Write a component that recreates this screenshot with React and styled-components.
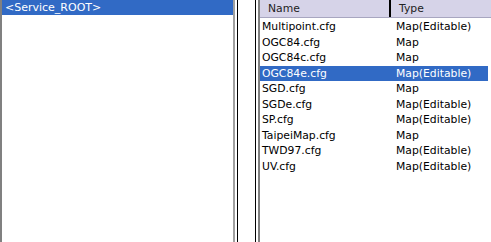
import styled, { createGlobalStyle } from "styled-components";

const files = [
  { name: "Multipoint.cfg", type: "Map(Editable)" },
  { name: "OGC84.cfg", type: "Map" },
  { name: "OGC84c.cfg", type: "Map" },
  { name: "OGC84e.cfg", type: "Map(Editable)", selected: true },
  { name: "SGD.cfg", type: "Map" },
  { name: "SGDe.cfg", type: "Map(Editable)" },
  { name: "SP.cfg", type: "Map(Editable)" },
  { name: "TaipeiMap.cfg", type: "Map" },
  { name: "TWD97.cfg", type: "Map(Editable)" },
  { name: "UV.cfg", type: "Map(Editable)" },
];

function App() {
  return (
    <>
      <GlobalStyle />
      <Window>
        <TreePane>
          <TreeItem>&lt;Service_ROOT&gt;</TreeItem>
        </TreePane>
        <Splitter />
        <ListPane>
          <HeaderRow>
            <HeaderCell $width="131px">Name</HeaderCell>
            <HeaderCell>Type</HeaderCell>
          </HeaderRow>
          <Rows>
            {files.map((f) => (
              <Row key={f.name} $selected={f.selected}>
                <NameCell>{f.name}</NameCell>
                <TypeCell>{f.type}</TypeCell>
              </Row>
            ))}
          </Rows>
        </ListPane>
      </Window>
    </>
  );
}

export default App;

const GlobalStyle = createGlobalStyle`
  body {
    margin: 0;
    background: #ffffff;
    font-family: "DejaVu Sans", Verdana, sans-serif;
    font-size: 10.8px;
  }
`;

const Window = styled.div`
  width: 491px;
  height: 242px;
  display: flex;
  background: #ffffff;
  overflow: hidden;
`;

const TreePane = styled.div`
  width: 231px;
  border-left: 2px solid #808080;
  border-right: 2px solid #a0a0a0;
  background: #ffffff;
`;

const TreeItem = styled.div`
  height: 15px;
  line-height: 15px;
  padding-left: 3px;
  font-size: 11px;
  background: #316ac5;
  color: #ffffff;
`;

const Splitter = styled.div`
  width: 17px;
  margin: 0 2px;
  border-left: 1px solid #000000;
  border-right: 1px solid #000000;
`;

const ListPane = styled.div`
  flex: 1;
  border-left: 2px solid #808080;
  display: flex;
  flex-direction: column;
`;

const HeaderRow = styled.div`
  height: 17px;
  display: flex;
  background: #d6d3e8;
  border-bottom: 1px solid #a8a6c0;
`;

const HeaderCell = styled.div`
  width: ${(p) => p.$width || "auto"};
  flex: ${(p) => (p.$width ? "none" : 1)};
  padding-left: 8px;
  line-height: 17px;
  color: #222222;
  border-right: ${(p) => (p.$width ? "2px solid #000000" : "none")};
  box-sizing: border-box;
`;

const Rows = styled.div`
  padding-top: 1px;
`;

const Row = styled.div`
  height: 15.5px;
  display: flex;
  align-items: center;
  margin-right: 3px;
  background: ${(p) => (p.$selected ? "#316ac5" : "transparent")};
  color: ${(p) => (p.$selected ? "#ffffff" : "#000000")};
`;

const NameCell = styled.div`
  width: 134px;
  padding-left: 2px;
`;

const TypeCell = styled.div`
  flex: 1;
`;
